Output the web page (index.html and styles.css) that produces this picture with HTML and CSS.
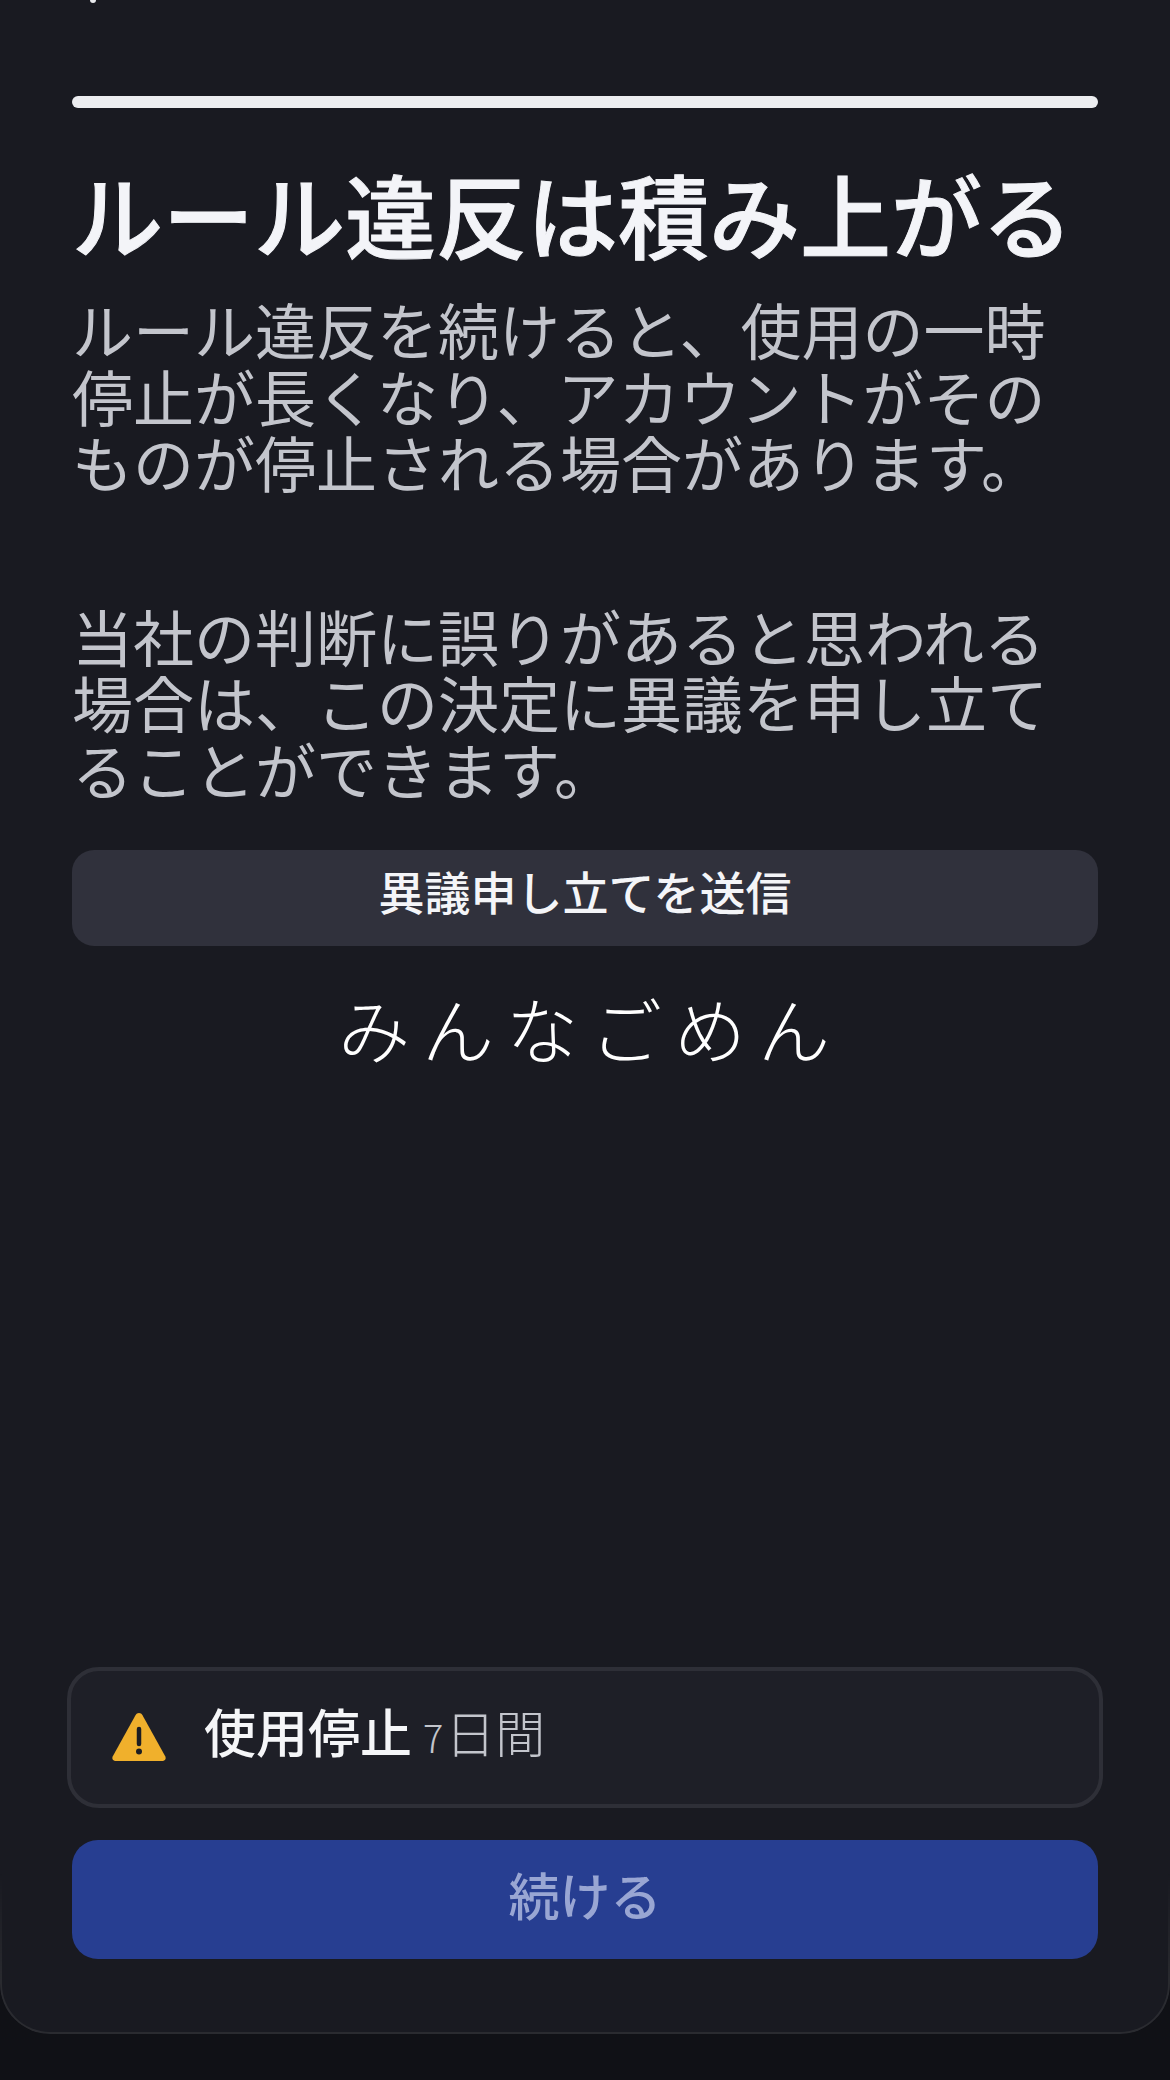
FILE: index.html
```html
<!DOCTYPE html>
<html lang="ja">
<head>
    <meta charset="UTF-8">
    <meta name="viewport" content="width=device-width, initial-scale=1.0">
    <title>ルール違反は積み上がる</title>
    <link rel="stylesheet" href="styles.css">
</head>
<body>
    <div class="sheet">
        <div class="back-tip"></div>
        <div class="progress"></div>

        <h1 class="title">ルール違反は積み上がる</h1>
        <p class="text">ルール違反を続けると、使用の一時停止が長くなり、アカウントがそのものが停止される場合があります。</p>
        <p class="text text-second">当社の判断に誤りがあると思われる場合は、この決定に異議を申し立てることができます。</p>

        <button class="appeal">異議申し立てを送信</button>
        <div class="note">みんなごめん</div>

        <div class="bottom">
            <div class="status">
                <svg class="warn-icon" width="54" height="50" viewBox="0 0 54 50">
                    <path d="M27 1c1.500 0 2.700.8 3.500 2.200l22.700 41c1.200 2.400 0 4.800-2.800 4.800H3.600C.8 49-.4 46.600.8 44.200l22.700-41C24.300 1.800 25.500 1 27 1z" fill="#f0b02c"/>
                    <path d="M27 17v15" stroke="#1c1d22" stroke-width="4.500" stroke-linecap="round"/>
                    <circle cx="27" cy="39.500" r="3" fill="#1c1d22"/>
                </svg>
                <span class="status-label">使用停止</span>
                <span class="status-days"><span class="status-num">7</span>日間</span>
            </div>
            <button class="continue">続ける</button>
        </div>
    </div>
</body>
</html>
```

FILE: styles.css
```css
html, body {
    margin: 0;
    height: 2080px;
    overflow: hidden;
    background-color: #101116;
}

body {
    font-family: 'Noto Sans CJK JP', 'Noto Sans', sans-serif;
}

.sheet {
    position: relative;
    box-sizing: border-box;
    height: 2034px;
    display: flex;
    flex-direction: column;
    padding: 96px 72px 75px;
    background-color: #191a21;
    border-radius: 0 0 50px 50px;
}

/* thin outline that only shows around the bottom corners */
.sheet::after {
    content: "";
    position: absolute;
    left: 0;
    right: 0;
    bottom: 0;
    height: 160px;
    box-sizing: border-box;
    border: 2px solid #2a2b30;
    border-top: none;
    border-radius: 0 0 50px 50px;
    -webkit-mask-image: linear-gradient(to bottom, transparent 0, #000 70%);
    mask-image: linear-gradient(to bottom, transparent 0, #000 70%);
    pointer-events: none;
}

/* bit of the back arrow cut off at the top edge */
.back-tip {
    position: absolute;
    top: 0;
    left: 90px;
    width: 6px;
    height: 3px;
    background-color: #e8e9ec;
    border-radius: 0 0 3px 3px;
}

.progress {
    height: 12px;
    border-radius: 6px;
    background-color: #ecedf0;
}

.title {
    margin: 54px 0 0;
    font-size: 91px;
    line-height: 100px;
    font-weight: 500;
    -webkit-text-stroke: 1px #f3f4f8;
    color: #f3f4f8;
    white-space: nowrap;
}

.text {
    margin: 34px 0 0;
    font-size: 61px;
    line-height: 66.500px;
    font-weight: 400;
    color: #c3c5cc;
}

.text-second {
    margin-top: 107px;
}

.appeal {
    display: block;
    width: 100%;
    height: 96px;
    margin-top: 48px;
    padding: 0 0 16px;
    border: none;
    border-radius: 22px;
    background-color: #30313c;
    color: #f4f5f8;
    font-family: inherit;
    font-size: 46px;
    font-weight: 500;
}

.note {
    margin-top: 38px;
    padding-left: 10px;
    text-align: center;
    font-size: 72px;
    line-height: 86px;
    font-weight: 300;
    letter-spacing: 12px;
    color: #ffffff;
}

.bottom {
    margin-top: auto;
}

.status {
    display: flex;
    align-items: center;
    box-sizing: border-box;
    height: 141px;
    margin: 0 -5px;
    padding: 0 0 14px 41px;
    background-color: #1e1f27;
    border: 4px solid #2e2f37;
    border-radius: 32px;
}

.warn-icon {
    flex-shrink: 0;
    margin-top: 12px;
}

.status-label {
    margin-left: 38px;
    font-size: 52px;
    font-weight: 500;
    color: #f5f6f8;
}

.status-days {
    margin-left: 11px;
    font-size: 50px;
    font-weight: 300;
    color: #c3c5cc;
}

.status-num {
    margin-right: 2px;
    font-size: 38px;
}

.continue {
    display: block;
    width: 100%;
    height: 119px;
    margin-top: 32px;
    padding: 0 0 12px;
    border: none;
    border-radius: 26px;
    background-color: #273e91;
    color: #99a6d3;
    font-family: inherit;
    font-size: 51px;
    font-weight: 500;
}
```
